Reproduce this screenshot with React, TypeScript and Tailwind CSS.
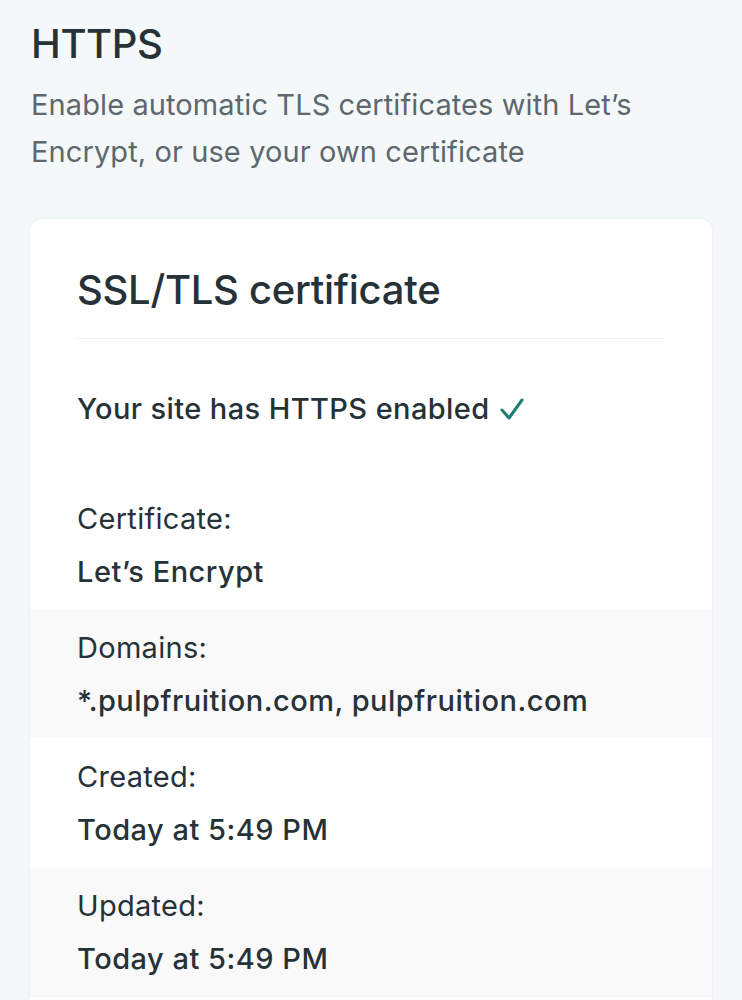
import React from 'react';

const rows = [
  { label: 'Certificate:', value: 'Let’s Encrypt' },
  { label: 'Domains:', value: '*.pulpfruition.com, pulpfruition.com' },
  { label: 'Created:', value: 'Today at 5:49 PM' },
  { label: 'Updated:', value: 'Today at 5:49 PM' },
];

const Check = () => (
  <svg width="24" height="24" viewBox="0 0 24 24" className="inline-block ml-[10px] -mt-[5px]">
    <polyline points="2,13 9,21 22,3" fill="none" stroke="#1d7f73" strokeWidth="3" strokeLinecap="round" strokeLinejoin="round" />
  </svg>
);

export default function App() {
  return (
    <div className="h-[1000px] overflow-hidden bg-[#f5f8f9] font-['Inter',sans-serif] text-[#263238]">
      <div className="pl-[31px] pr-[30px] pt-[18px]">
        <h1 className="text-[40px] leading-[52px] font-medium tracking-[-0.4px]">HTTPS</h1>
        <p className="mt-[11px] text-[29px] leading-[47px] text-[#5c686e] tracking-[0.1px]">
          Enable automatic TLS certificates with Let’s Encrypt, or use your own certificate
        </p>
      </div>

      <div className="mt-[44px] mx-[30px] bg-white rounded-[12px] shadow-[0_0_3px_rgba(0,0,0,0.07)]">
        <div className="mx-[47px] pt-[48px] pb-[25px] border-b border-[#eef0f1]">
          <h2 className="text-[40px] leading-[46px] font-medium tracking-[-0.3px]">SSL/TLS certificate</h2>
        </div>
        <div className="px-[47px] pt-[50px] pb-[51px]">
          <p className="text-[29px] leading-[40px] font-medium tracking-[0.4px]">
            Your site has HTTPS enabled
            <Check />
          </p>
        </div>
        {rows.map((r, i) => (
          <div key={r.label} className={`px-[47px] pt-[12px] pb-[11px] ${i % 2 === 1 ? 'bg-[#f9f9f9]' : 'bg-white'}`}>
            <div className="text-[29px] leading-[53px] tracking-[0.3px]">{r.label}</div>
            <div className="text-[29px] leading-[53px] font-medium tracking-[0.5px]">{r.value}</div>
          </div>
        ))}
        <div className="h-[60px] bg-white border-t border-[#f3f4f5]" />
      </div>
    </div>
  );
}
